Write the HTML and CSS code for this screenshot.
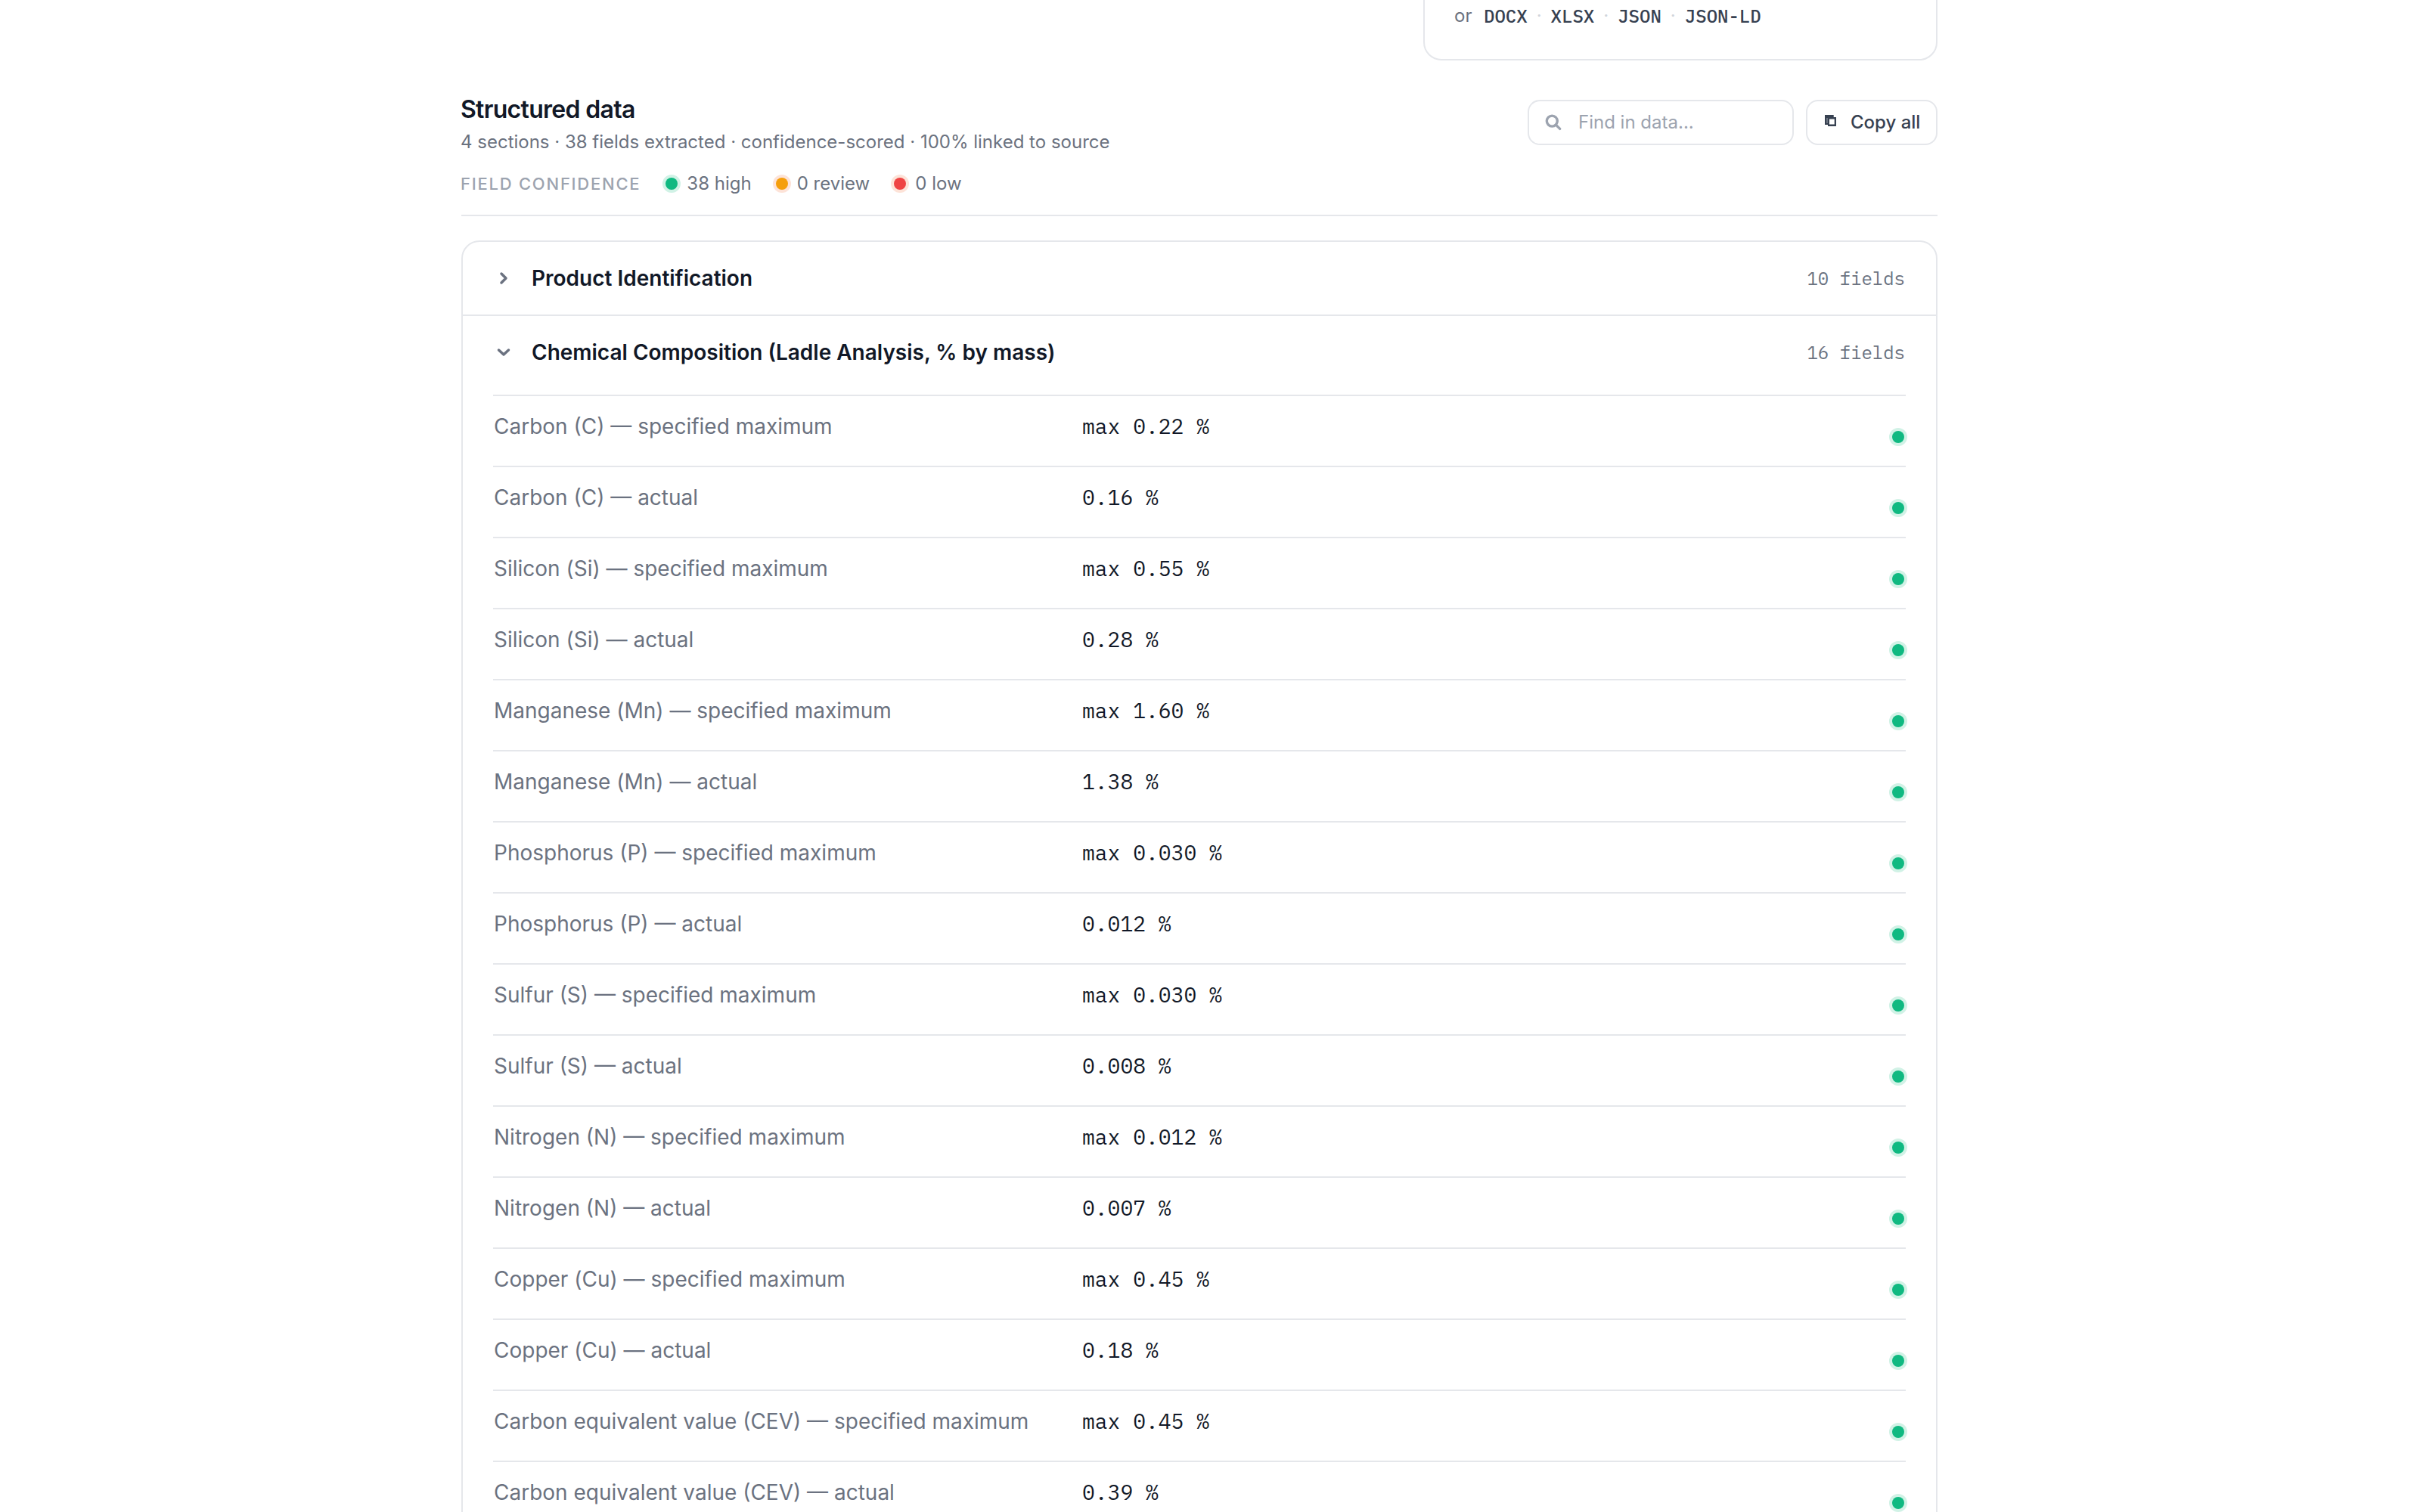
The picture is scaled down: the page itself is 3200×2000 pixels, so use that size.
FILE: index.html
```
<!DOCTYPE html>
<html lang="en">
<head>
<meta charset="utf-8">
<title>Structured data</title>
<link rel="stylesheet" href="styles.css">
</head>

<body>
<div class="page">

  <div class="download">
    <span class="or">or</span>
    <a>DOCX</a><i>·</i><a>XLSX</a><i>·</i><a>JSON</a><i>·</i><a>JSON-LD</a>
  </div>

  <div class="head">
    <div class="intro">
      <h2>Structured data</h2>
      <p>4 sections · 38 fields extracted · confidence-scored · 100% linked to source</p>
      <div class="legend">
        <span class="caption">FIELD CONFIDENCE</span>
        <span class="level"><b class="dot"></b>38 high</span>
        <span class="level"><b class="dot review"></b>0 review</span>
        <span class="level"><b class="dot low"></b>0 low</span>
      </div>
    </div>
    <div class="tools">
      <div class="search">
        <svg width="24" height="24" viewBox="0 0 24 24"><circle cx="10.3" cy="10.1" r="7" /><path d="M15.6 15.4l5.1 5" /></svg>
        Find in data...
      </div>
      <div class="copy">
        <svg width="16" height="18" viewBox="0 0 16 18"><path d="M0 1h11.7v3H15v12H4v-2H0z" fill="#374151"/><path d="M2 5h2v7H2z" fill="#6b7280"/><path d="M6 6.5h6.7v7H6z" fill="#fff"/></svg>
        Copy all
      </div>
    </div>
  </div>

  <div class="card">
    <div class="section">
      <svg width="24" height="24" viewBox="0 0 24 24"><path d="M9 6l6 6-6 6" /></svg>
      <h3>Product Identification</h3>
      <span class="count">10 fields</span>
    </div>
    <div class="section open">
      <svg width="24" height="24" viewBox="0 0 24 24"><path d="M5.5 9l6.5 6 6.5-6" /></svg>
      <h3>Chemical Composition (Ladle Analysis, % by mass)</h3>
      <span class="count">16 fields</span>
    </div>
    <div class="fields">
      <div class="row"><span>Carbon (C) — specified maximum</span><code>max 0.22 %</code><b class="dot"></b></div>
      <div class="row"><span>Carbon (C) — actual</span><code>0.16 %</code><b class="dot"></b></div>
      <div class="row"><span>Silicon (Si) — specified maximum</span><code>max 0.55 %</code><b class="dot"></b></div>
      <div class="row"><span>Silicon (Si) — actual</span><code>0.28 %</code><b class="dot"></b></div>
      <div class="row"><span>Manganese (Mn) — specified maximum</span><code>max 1.60 %</code><b class="dot"></b></div>
      <div class="row"><span>Manganese (Mn) — actual</span><code>1.38 %</code><b class="dot"></b></div>
      <div class="row"><span>Phosphorus (P) — specified maximum</span><code>max 0.030 %</code><b class="dot"></b></div>
      <div class="row"><span>Phosphorus (P) — actual</span><code>0.012 %</code><b class="dot"></b></div>
      <div class="row"><span>Sulfur (S) — specified maximum</span><code>max 0.030 %</code><b class="dot"></b></div>
      <div class="row"><span>Sulfur (S) — actual</span><code>0.008 %</code><b class="dot"></b></div>
      <div class="row"><span>Nitrogen (N) — specified maximum</span><code>max 0.012 %</code><b class="dot"></b></div>
      <div class="row"><span>Nitrogen (N) — actual</span><code>0.007 %</code><b class="dot"></b></div>
      <div class="row"><span>Copper (Cu) — specified maximum</span><code>max 0.45 %</code><b class="dot"></b></div>
      <div class="row"><span>Copper (Cu) — actual</span><code>0.18 %</code><b class="dot"></b></div>
      <div class="row"><span>Carbon equivalent value (CEV) — specified maximum</span><code>max 0.45 %</code><b class="dot"></b></div>
      <div class="row"><span>Carbon equivalent value (CEV) — actual</span><code>0.39 %</code><b class="dot"></b></div>
    </div>
  </div>

</div>
</body>
</html>
```
FILE: styles.css
```
* { box-sizing: border-box; }
body { margin: 0; height: 2000px; overflow: hidden; background: #fff;
       color: #111827; font: 24px/36px Inter, sans-serif; }
h2, h3, p { margin: 0; }
svg { flex: none; fill: none; stroke-linecap: round; stroke-linejoin: round; }

.page { width: 1952px; margin-left: 610px; }

/* end of the download box, cut by the top of the window */
.download { display: flex; align-items: flex-start; width: 680px; height: 80px;
            margin-left: auto; padding: 3px 39px 0;
            border: 2px solid #e5e7eb; border-top: 0; border-radius: 0 0 24px 24px; }
.download .or { width: 39px; color: #6b7280; }
.download a { font: 500 24px/36px "IBM Plex Mono", "Liberation Mono", monospace; color: #374151; }
.download i { width: 31px; text-align: center; font-style: normal; color: #d1d5db; }

.head { display: flex; justify-content: space-between; height: 206px;
        padding-top: 42px; border-bottom: 2px solid #e5e7eb; }
.intro { margin: 1px 0 0 -1px; }
h2 { font-size: 32px; line-height: 44px; font-weight: 600; letter-spacing: -0.7px; }
.intro p { margin-top: 3px; color: #6b7280; }
.legend { display: flex; align-items: center; margin-top: 19px; color: #6b7280; line-height: 36px; }
.caption { margin-right: 33px; color: #9ca3af; font-size: 22px; font-weight: 500; letter-spacing: 1.76px; }
.level { display: flex; align-items: center; gap: 12px; margin-right: 32px; }

.dot { flex: none; width: 16px; height: 16px; border-radius: 50%;
       background: #10b981; box-shadow: 0 0 0 4px #d1f2e6; }
.dot.review { background: #f59e0b; box-shadow: 0 0 0 4px #fde3d8; }
.dot.low { background: #ef4444; box-shadow: 0 0 0 4px #fde3d8; }

.tools { display: flex; gap: 16px; padding-top: 10px; }
.search, .copy { display: flex; align-items: center; height: 60px;
                 border: 2px solid #e5e7eb; border-radius: 16px; }
.search { width: 352px; padding-left: 20px; gap: 21px; color: #9ca3af; }
.search svg { stroke: #9ca3af; stroke-width: 3.4; }
.copy { width: 174px; padding-left: 23px; gap: 18px; color: #374151; font-weight: 500; }
.copy svg { margin-top: -4px; }

.card { margin-top: 32px; border: 2px solid #e5e7eb; border-radius: 24px; }
.section { display: flex; align-items: center; height: 98px; padding: 0 41px 0 40px;
           border-bottom: 2px solid #e5e7eb; }
.section.open { height: 104px; padding-bottom: 8px; border-bottom: 0; }
.section svg { margin: 0 25px 0 2px; stroke: #6b7280; stroke-width: 3.5; }
h3 { flex: 1; font-size: 28px; font-weight: 600; }
.count { font: 24px/36px "IBM Plex Mono", "Liberation Mono", monospace; color: #6b7280; }

.fields { padding: 0 40px; }
.row { display: grid; grid-template-columns: 746px 1fr 16px; column-gap: 32px;
       height: 94px; padding: 19px 2px 0 1px; border-top: 2px solid #e5e7eb;
       font-size: 28px; line-height: 42px; }
.row span { color: #6b7280; }
.row code { font: 28px/42px "IBM Plex Mono", "Liberation Mono", monospace; }
.row .dot { margin-top: 27px; }
```
